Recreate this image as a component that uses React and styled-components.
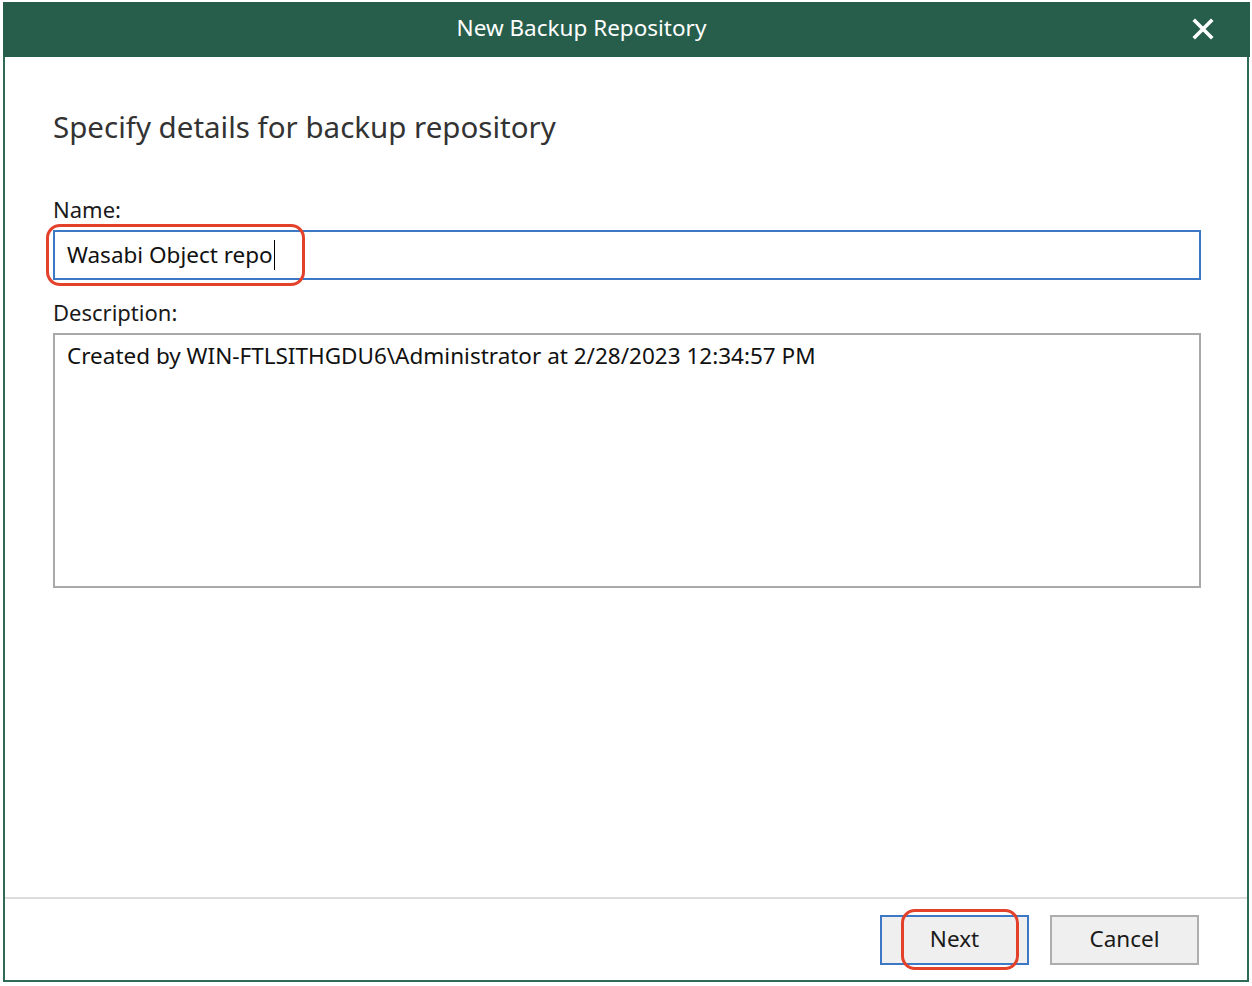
import styled, { createGlobalStyle } from "styled-components";

const GlobalStyle = createGlobalStyle`
  html, body {
    margin: 0;
    padding: 0;
    background: #ffffff;
  }
  body {
    font-family: "Noto Sans", "Open Sans", sans-serif;
  }
`;

export default function App() {
  return (
    <>
      <GlobalStyle />
      <Window>
        <TitleBar>
          <TitleText>New Backup Repository</TitleText>
          <CloseButton aria-label="Close">
            <svg width="22" height="22" viewBox="0 0 22 22">
              <path d="M3 3 L19 19 M19 3 L3 19" stroke="#fff" strokeWidth="3.6" strokeLinecap="square" />
            </svg>
          </CloseButton>
        </TitleBar>
        <Body>
          <Content>
            <Heading>Specify details for backup repository</Heading>
            <Label>Name:</Label>
            <Field $focused>
              <FieldText>
                Wasabi Object repo
                <Caret />
              </FieldText>
              <Callout $left={-9} $top={-8} $width={259} $height={62} />
            </Field>
            <Label $spaced>Description:</Label>
            <TextArea>
              <FieldText>Created by WIN-FTLSITHGDU6\Administrator at 2/28/2023 12:34:57 PM</FieldText>
            </TextArea>
          </Content>
          <Footer>
            <Button $primary>
              Next
              <Callout $left={19} $top={-8} $width={118} $height={61} />
            </Button>
            <Button>Cancel</Button>
          </Footer>
        </Body>
      </Window>
    </>
  );
}

const Window = styled.div`
  margin: 2px 2px 0 3px;
  width: 1247px;
  height: 980px;
  display: flex;
  flex-direction: column;
`;

const TitleBar = styled.div`
  position: relative;
  height: 55px;
  flex-shrink: 0;
  background: #275e4b;
  display: flex;
  align-items: center;
  justify-content: center;
`;

const TitleText = styled.div`
  color: #ffffff;
  font-size: 22.5px;
  margin-left: -90px;
  margin-top: -4px;
`;

const CloseButton = styled.div`
  position: absolute;
  right: 36px;
  top: 16px;
  width: 22px;
  height: 22px;
  display: flex;
`;

const Body = styled.div`
  flex: 1;
  display: flex;
  flex-direction: column;
  background: #ffffff;
  border: 2px solid #2f6a56;
  border-top: none;
  margin-right: 1px;
`;

const Content = styled.div`
  flex: 1;
  padding: 50px 46px 0 48px;
  display: flex;
  flex-direction: column;
`;

const Heading = styled.h1`
  margin: 0;
  font-weight: 400;
  font-size: 29.5px;
  line-height: 40px;
  color: #333333;
`;

const Label = styled.div`
  margin-top: ${(p) => (p.$spaced ? "18px" : "48px")};
  margin-bottom: 7px;
  font-size: 22px;
  line-height: 28px;
  color: #1a1a1a;
`;

const Field = styled.div`
  position: relative;
  height: 50px;
  box-sizing: border-box;
  border: 2px solid ${(p) => (p.$focused ? "#3c78c6" : "#a9a9a9")};
  display: flex;
  align-items: center;
  padding: 0 12px;
`;

const TextArea = styled.div`
  height: 255px;
  box-sizing: border-box;
  border: 2px solid #a9a9a9;
  padding: 6px 12px;
`;

const FieldText = styled.span`
  font-size: 22.5px;
  line-height: 30px;
  color: #111111;
  display: inline-flex;
  align-items: center;
  white-space: nowrap;
`;

const Caret = styled.span`
  display: inline-block;
  width: 1px;
  height: 30px;
  background: #000000;
  margin-left: 1px;
`;

const Callout = styled.span`
  position: absolute;
  left: ${(p) => p.$left}px;
  top: ${(p) => p.$top}px;
  width: ${(p) => p.$width}px;
  height: ${(p) => p.$height}px;
  box-sizing: border-box;
  border: 3px solid #e4412b;
  border-radius: 14px;
  pointer-events: none;
`;

const Footer = styled.div`
  flex-shrink: 0;
  border-top: 2px solid #dcdcdc;
  padding: 16px 48px 15px 0;
  display: flex;
  justify-content: flex-end;
  gap: 21px;
`;

const Button = styled.div`
  position: relative;
  width: 149px;
  height: 50px;
  box-sizing: border-box;
  background: #efefef;
  border: 2px solid ${(p) => (p.$primary ? "#3c78c6" : "#adadad")};
  display: flex;
  align-items: center;
  justify-content: center;
  font-size: 22.5px;
  line-height: 28px;
  padding-bottom: 2px;
  color: #1a1a1a;
`;
